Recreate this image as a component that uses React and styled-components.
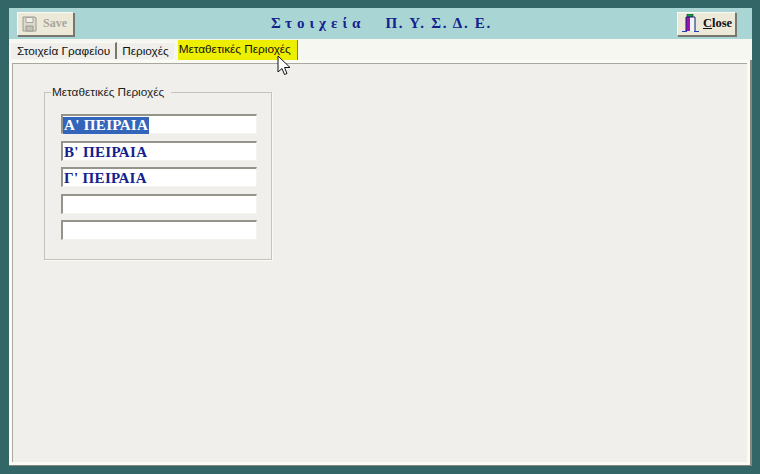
import React from "react";
import styled, { createGlobalStyle } from "styled-components";

const GlobalStyle = createGlobalStyle`
  html, body {
    margin: 0;
    height: 100%;
    background: #336666;
  }
  #root {
    height: 100%;
  }
`;

const Page = styled.div`
  position: relative;
  width: 760px;
  height: 474px;
  padding: 8px 8px 8px 9px;
  box-sizing: border-box;
  overflow: hidden;
  background: #336666;
  font-family: "Liberation Sans", Arial, sans-serif;
`;

const Window = styled.div`
  display: flex;
  flex-direction: column;
  width: 743px;
  height: 458px;
  background: #f7f7f2;
`;

const Header = styled.div`
  display: flex;
  align-items: center;
  justify-content: space-between;
  height: 31px;
  padding: 0 16px 0 8px;
  box-sizing: border-box;
  background: #a9d6d5;
`;

const ToolButton = styled.button`
  display: flex;
  align-items: center;
  gap: ${(p) => p.$gap}px;
  width: ${(p) => p.$width}px;
  height: 24px;
  padding: 0 0 0 4px;
  box-sizing: border-box;
  border: 1px solid;
  border-color: #fbfbf6 #77776f #77776f #fbfbf6;
  box-shadow: 1px 1px 0 #77776f;
  background: #ece9d8;
  font-family: "Liberation Serif", "Times New Roman", serif;
  font-size: ${(p) => p.$size}px;
  font-weight: bold;
  color: ${(p) => p.$color};
`;

const Underlined = styled.span`
  text-decoration: underline;
`;

const Title = styled.div`
  display: flex;
  gap: 20px;
  margin-left: 12px;
  font-family: "Liberation Serif", "Times New Roman", serif;
  font-size: 15px;
  font-weight: bold;
  color: #14218c;
  white-space: pre;
`;

const TitleWord = styled.span`
  letter-spacing: ${(p) => p.$spacing}px;
`;

const TabStrip = styled.div`
  display: flex;
  align-items: flex-start;
  height: 21px;
  padding: 1px 0 0 2px;
  box-sizing: border-box;
`;

const Tab = styled.div`
  display: flex;
  align-items: center;
  height: 16px;
  margin-top: 2px;
  padding: 0 5px 0 ${(p) => p.$inset}px;
  border-top: 1px solid #fbfbf6;
  border-right: ${(p) => (p.$last ? 0 : 2)}px solid #77776f;
  background: #f0efeb;
  font-size: 11.8px;
  color: #111;
  white-space: nowrap;
`;

const ActiveTab = styled.div`
  display: flex;
  align-items: center;
  height: 20px;
  margin-left: 4px;
  padding: 0 6px 3px 1px;
  box-sizing: border-box;
  border-right: 1px solid #77776f;
  background: #eeee00;
  font-size: 11.8px;
  color: #111;
  white-space: nowrap;
`;

const Panel = styled.div`
  flex: 1;
  display: flex;
  min-height: 0;
  border-right: 2px solid #88887e;
  border-bottom: 1px solid #88887e;
`;

const PanelBody = styled.div`
  flex: 1;
  padding: 22px 0 0 32px;
  border: 3px solid #fbfbf6;
  box-sizing: border-box;
  background: #f0efeb;
  box-shadow: inset 1px 1px 0 #a8a89e;
`;

const GroupBox = styled.fieldset`
  display: flex;
  flex-direction: column;
  gap: 6.5px;
  width: 228px;
  height: 175px;
  margin: 0;
  padding: 15px 0 0 16px;
  box-sizing: border-box;
  border: 1px solid #c4c4ba;
  box-shadow: 1px 1px 0 #fbfbf6;
`;

const GroupLabel = styled.legend`
  padding: 0 7px 0 1px;
  margin-left: -10px;
  font-size: 11.8px;
  color: #222;
`;

const Field = styled.div`
  width: 196px;
  height: 20px;
  padding: 1px 0 0 1px;
  box-sizing: border-box;
  border-top: 2px solid #94948a;
  border-left: 2px solid #94948a;
  border-right: 1px solid #f4f4ee;
  border-bottom: 1px solid #f4f4ee;
  background: #ffffff;
  font-family: "Liberation Serif", "Times New Roman", serif;
  font-size: 15px;
  font-weight: bold;
  letter-spacing: 0.35px;
  line-height: 16px;
  color: #14218c;
  white-space: nowrap;
`;

const Selected = styled.span`
  display: inline-block;
  height: 17px;
  margin: -1px 0 0 -1px;
  padding: 0 1px;
  background: #3366bb;
  color: #ffffff;
  line-height: 17px;
`;

const Cursor = styled.svg`
  position: absolute;
  left: 277px;
  top: 55px;
`;

const SaveIcon = () => (
  <svg width="15" height="16" viewBox="0 0 15 16">
    <path d="M1 1h12l1 1v13H1z" fill="#dcdacb" stroke="#9a9a90" />
    <path d="M4 1.5h7v5H4z" fill="#f2f1e8" stroke="#a5a59b" />
    <path d="M4 10h7v5H4z" fill="#c2c1b6" stroke="#9a9a90" />
  </svg>
);

const CloseIcon = () => (
  <svg width="17" height="19" viewBox="0 0 17 19">
    <path d="M5 0h6v2.5H5z" fill="#10a040" stroke="#0a3a20" strokeWidth="0.6" />
    <path d="M4 3h4v14H4z" fill="#a010b0" />
    <path d="M8 3h6v14H8z" fill="#eef4fa" />
    <path d="M4 17V3h9v14" fill="none" stroke="#10206c" strokeWidth="1" />
    <path d="M0 17.5h5M12 17.5h5" stroke="#2040c0" strokeWidth="1.2" />
    <path d="M13.5 4v13" stroke="#4a90d8" strokeWidth="1" />
  </svg>
);

const regions = ["Α' ΠΕΙΡΑΙΑ", "Β' ΠΕΙΡΑΙΑ", "Γ' ΠΕΙΡΑΙΑ", "", ""];

export default function App() {
  return (
    <>
      <GlobalStyle />
      <Page>
        <Window>
          <Header>
            <ToolButton $width={57} $gap={6} $size={12} $color="#a5a59b">
              <SaveIcon />
              Save
            </ToolButton>
            <Title>
              <TitleWord $spacing={5}>Στοιχεία</TitleWord>
              <TitleWord $spacing={1.7}>Π. Υ. Σ. Δ. Ε.</TitleWord>
            </Title>
            <ToolButton $width={59} $gap={4} $size={12.5} $color="#111">
              <CloseIcon />
              <span>
                <Underlined>C</Underlined>lose
              </span>
            </ToolButton>
          </Header>
          <TabStrip>
            <Tab $inset={6}>Στοιχεία Γραφείου</Tab>
            <Tab $inset={5} $last>
              Περιοχές
            </Tab>
            <ActiveTab>Μεταθετικές Περιοχές</ActiveTab>
          </TabStrip>
          <Panel>
            <PanelBody>
              <GroupBox>
                <GroupLabel>Μεταθετικές Περιοχές</GroupLabel>
                {regions.map((name, i) => (
                  <Field key={i}>
                    {i === 0 ? <Selected>{name}</Selected> : name}
                  </Field>
                ))}
              </GroupBox>
            </PanelBody>
          </Panel>
        </Window>
        <Cursor width="14" height="22" viewBox="0 0 14 22">
          <path
            d="M1 1v16l4-3.5 2.5 6 2.5-1-2.5-6H13z"
            fill="#fff"
            stroke="#111"
            strokeWidth="1"
          />
        </Cursor>
      </Page>
    </>
  );
}
